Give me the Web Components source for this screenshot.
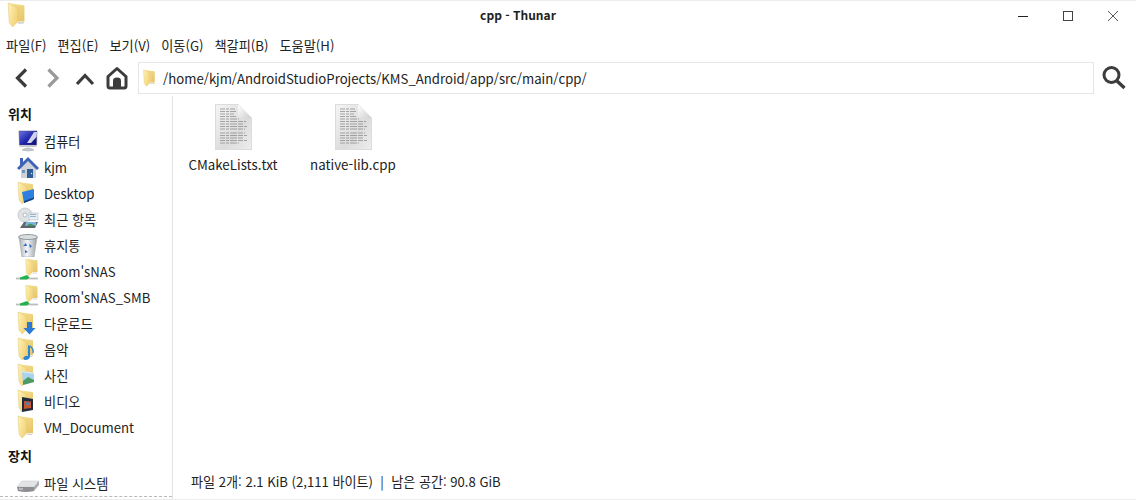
<!DOCTYPE html>
<html lang="ko">
<head>
<meta charset="utf-8">
<title>cpp - Thunar</title>
<style>
	html, body { margin: 0; height: 100%; background: #fff; }
	body { font: 13.2px "Noto Sans CJK KR", "Noto Sans", sans-serif; color: #222; overflow: hidden; }
</style>
</head>
<body>
<thunar-window></thunar-window>
<script>
// shared folder drawing, the overlay differs per place
const folderSvg = (size, extra = "", shrink = false) => `
	<svg width="${size}" height="${size}" viewBox="0 0 24 24">
		<defs>
			<linearGradient id="back" x1="0" y1="0" x2="1" y2="1">
				<stop offset="0" stop-color="#f8e596"/><stop offset="1" stop-color="#e6c368"/>
			</linearGradient>
			<linearGradient id="front" x1="0" y1="0" x2="1" y2="0.5">
				<stop offset="0" stop-color="#fdf3b8"/><stop offset="1" stop-color="#f3d377"/>
			</linearGradient>
		</defs>
		<g transform="${shrink ? "translate(5.500 -1) scale(.8 .78)" : "translate(-3 0)"}">
			<path d="M14 18.500 H20 L19 20 H14 Z" fill="#d5d5d5"/>
			<path d="M5 1 L19 3 Q20 3 20 4 V18 L14 18 V6 Z" fill="url(#back)"/>
			<path d="M5 1 L14 5.500 V18 L9 23 L6 19 Z" fill="url(#front)" stroke="#dcb95f" stroke-width=".4"/>
			${shrink ? "" : extra}
		</g>
		${shrink ? extra : ""}
	</svg>`;

const overlays = {
	plain: "",
	desktop: `<path d="M9 11 L21 8 V18 L11 22 Z" fill="#2f7fe0"/><path d="M11 20 L21 16.500 V18 L11 22 Z" fill="#16407f"/>`,
	share: `<path d="M0 19.500 H22" stroke="#bdbdbd" stroke-width="1.800"/><path d="M4 18.500 L11 16 L13.500 18.500 L11 20.500 L4 20.500 Z" fill="#22b14c"/>`,
	down: `<path d="M14 11 H19 V17 H22.500 L16.500 23.500 L10.500 17 H14 Z" fill="#2a79d4"/>`,
	music: `<path d="M15 8 L17 9 V19 Q17 23 12 23 Q9 22 11 20 Q13 18 15 19 Z" fill="#2c86cf"/><path d="M17 9 Q21 12 20 16" stroke="#2c86cf" stroke-width="1.400" fill="none"/>`,
	photo: `<path d="M9 8 L21 10 V19 L10 22 Z" fill="#a9d3ee"/><path d="M10 18 L15 14 L21 17 V19 L10 22 Z" fill="#4f9a64"/><path d="M9 8 L21 10 V11 L9 9 Z" fill="#e8eef2"/>`,
	video: `<path d="M9 8 L20 10 V21 L9 23 Z" fill="#1d2b3d"/><path d="M11 12 L18 12.500 V19 L11 20 Z" fill="#c9552e"/><path d="M12.500 13 L17 14 L14.500 17.500 Z" fill="#3e86c9"/>`,
};

customElements.define("folder-icon", class extends HTMLElement {
	constructor() {
		super();
		this.attachShadow({ mode: "open" });
	}
	connectedCallback() {
		const size = this.getAttribute("size") || 24;
		const kind = this.getAttribute("kind") || "plain";
		this.shadowRoot.innerHTML = `<style>:host { display: inline-flex; }</style>` + folderSvg(size, overlays[kind], kind === "share");
	}
});

const placeIcons = {
	computer: `<svg width="24" height="24" viewBox="0 0 24 24">
		<defs><linearGradient id="s" x1="0" y1="0" x2="1" y2="1"><stop offset="0" stop-color="#6a74e8"/><stop offset=".55" stop-color="#1f24a8"/><stop offset="1" stop-color="#0c1170"/></linearGradient></defs>
		<path d="M3 2 H21 L20.500 16 H3.500 Z" fill="url(#s)" stroke="#4a4a6a" stroke-width=".5"/>
		<path d="M11 14 L18 3 H21 L20.500 8 L15 14 Z" fill="#fff" opacity=".8"/>
		<path d="M3.500 16 H20.500 V18 H3.500 Z" fill="#c6c8ce"/>
		<path d="M6 21 Q12 17 18 21 Q12 23 6 21 Z" fill="#c9cbd0" stroke="#9a9ca2" stroke-width=".5"/></svg>`,
	home: `<svg width="24" height="24" viewBox="0 0 24 24">
		<path d="M12 3 L22 14 L20 14 V23 H5 V14 H2 Z" fill="#cfd3d9"/>
		<path d="M12 2 L23 13 L21 15 L12 6 L3 15 L1 13 L4 10 V3 H7 V7 Z" fill="#3e62b5"/>
		<path d="M11 14 H17 V23 H11 Z" fill="#2f5f96"/><circle cx="15.500" cy="18.500" r=".7" fill="#dde"/>
		<path d="M6 15 H9 V18 H6 Z" fill="#6f93bd"/></svg>`,
	recent: `<svg width="24" height="24" viewBox="0 0 24 24">
		<circle cx="9" cy="8" r="7" fill="#dfe3e6" stroke="#aeb4b9" stroke-width=".6"/>
		<circle cx="9" cy="8" r="2" fill="#f7f8f9" stroke="#9aa0a5" stroke-width=".6"/>
		<path d="M13 6 H22 V13 H13 Z" fill="#e9eef2" stroke="#9fb0bc" stroke-width=".5"/><path d="M14 7.500 H20 M14 9.500 H20" stroke="#7ea7c4" stroke-width=".8"/>
		<path d="M4 21 L8 15 H22 L19 21 Z" fill="#5e666b"/><path d="M10 15 H20 V19 H9 Z" fill="#79b6db"/><path d="M10 19 L14 16.500 L20 19 Z" fill="#4a8f5e"/></svg>`,
	trash: `<svg width="24" height="24" viewBox="0 0 24 24">
		<defs><linearGradient id="t" x1="0" y1="0" x2="1" y2="0"><stop offset="0" stop-color="#aab0b4"/><stop offset=".45" stop-color="#f4f6f7"/><stop offset="1" stop-color="#9aa1a6"/></linearGradient></defs>
		<path d="M3 4 L6 24 H18 L21 4 Z" fill="url(#t)" stroke="#92989c" stroke-width=".5"/>
		<ellipse cx="12" cy="4" rx="9.500" ry="2.500" fill="#d9dde0" stroke="#7f8589" stroke-width=".8"/>
		<path d="M7 13 L10 10 L11 13 Z M9 17 L12 19 L9 20 Z M13 11 L16 13 L14 15 Z" fill="#2e6fc4"/></svg>`,
	drive: `<svg width="24" height="24" viewBox="0 0 24 24">
		<path d="M1 16 L6 10 H23 L18 16 Z" fill="#e3e4e6" stroke="#b5b6b8" stroke-width=".4"/>
		<path d="M1 16 H18 V20 Q10 22 2 20 Z" fill="#8d8f92"/><path d="M18 16 L23 10 V14 L18 20 Z" fill="#a8aaad"/>
		<path d="M3 18 H7" stroke="#e5e5e5" stroke-width="1"/></svg>`,
};

customElements.define("place-row", class extends HTMLElement {
	constructor() {
		super();
		this.attachShadow({ mode: "open" });
	}
	connectedCallback() {
		const icon = this.getAttribute("icon");
		const folder = this.getAttribute("folder");
		const art = folder !== null
			? `<folder-icon kind="${folder || "plain"}"></folder-icon>`
			: placeIcons[icon];
		this.shadowRoot.innerHTML = `
			<style>
				:host { display: flex; align-items: center; height: 26px; padding-left: 16px; gap: 4px; white-space: nowrap; }
				.art { width: 24px; height: 24px; display: flex; }
			</style>
			<span class="art">${art}</span>
			<slot></slot>
		`;
	}
});

customElements.define("place-heading", class extends HTMLElement {
	constructor() {
		super();
		this.attachShadow({ mode: "open" }).innerHTML = `
			<style>
				:host { display: flex; align-items: center; height: 30px; padding-left: 8px; font-weight: 700; font-size: 13px; color: #111; }
			</style>
			<slot></slot>
		`;
	}
});

customElements.define("side-pane", class extends HTMLElement {
	constructor() {
		super();
		this.attachShadow({ mode: "open" }).innerHTML = `
			<style>
				:host { display: block; width: 172px; flex: none; border-right: 1px solid #e4e4e4; overflow: hidden; position: relative; }
				.top { height: 2px; }
				.cut { position: absolute; left: 0; right: 0; bottom: 2px; border-top: 1px dashed #b9b9b9; }
			</style>
			<div class="top"></div>
			<place-heading>위치</place-heading>
			<place-row icon="computer">컴퓨터</place-row>
			<place-row icon="home">kjm</place-row>
			<place-row folder="desktop">Desktop</place-row>
			<place-row icon="recent">최근 항목</place-row>
			<place-row icon="trash">휴지통</place-row>
			<place-row folder="share">Room'sNAS</place-row>
			<place-row folder="share">Room'sNAS_SMB</place-row>
			<place-row folder="down">다운로드</place-row>
			<place-row folder="music">음악</place-row>
			<place-row folder="photo">사진</place-row>
			<place-row folder="video">비디오</place-row>
			<place-row folder="">VM_Document</place-row>
			<place-heading>장치</place-heading>
			<place-row icon="drive">파일 시스템</place-row>
			<div class="cut"></div>
		`;
	}
});

customElements.define("file-item", class extends HTMLElement {
	constructor() {
		super();
		this.attachShadow({ mode: "open" }).innerHTML = `
			<style>
				:host { display: flex; flex-direction: column; align-items: center; width: 120px; font-size: 13.330px; }
				svg { display: block; }
				.name { margin-top: 4px; line-height: 20px; }
			</style>
			<svg width="48" height="48" viewBox="0 0 48 48">
				<defs>
					<linearGradient id="page" x1="0" y1="0" x2="1" y2="1">
						<stop offset="0" stop-color="#f4f4f4"/><stop offset=".6" stop-color="#dcdcdc"/><stop offset="1" stop-color="#ededed"/>
					</linearGradient>
					<linearGradient id="fold" x1="0" y1="0" x2="1" y2="1">
						<stop offset="0" stop-color="#ffffff"/><stop offset="1" stop-color="#cfcfcf"/>
					</linearGradient>
					<filter id="soft"><feGaussianBlur stdDeviation=".4"/></filter>
				</defs>
				<path d="M6 1 H29 L43 15 V47 H6 Z" fill="#dcdcdc"/>
				<path d="M7 2 H29 L42 15 V46 H7 Z" fill="url(#page)"/>
				<path d="M29 1.500 L42.500 15 H32 Q29 15 29 12 Z" fill="url(#fold)"/>
				<g stroke="#858585" stroke-width=".7" stroke-dasharray="5 1 3 1 7 1" fill="none" filter="url(#soft)">
					<path d="M11 6 H26 M11 8.500 H27 M11 11 H25 M11 13.500 H27 M11 16 H30 M11 18.500 H37 M11 21 H35 M11 23.500 H38 M11 26 H36"/>
					<path d="M11 30 H36 M11 32.500 H38 M11 35 H34 M11 37.500 H38 M11 40 H30"/>
				</g>
			</svg>
			<span class="name"><slot></slot></span>
		`;
	}
});

customElements.define("file-view", class extends HTMLElement {
	constructor() {
		super();
		this.attachShadow({ mode: "open" }).innerHTML = `
			<style>
				:host { display: flex; flex-direction: column; flex: 1; min-width: 0; }
				.grid { flex: 1; display: flex; padding-top: 7px; }
				.status { height: 36px; padding-left: 18px; display: flex; align-items: center; font-size: 13.100px; white-space: pre; }
			</style>
			<div class="grid">
				<file-item>CMakeLists.txt</file-item>
				<file-item>native-lib.cpp</file-item>
			</div>
			<div class="status">파일 2개: 2.1 KiB (2,111 바이트)  |  남은 공간: 90.8 GiB</div>
		`;
	}
});

customElements.define("tool-bar", class extends HTMLElement {
	constructor() {
		super();
		this.attachShadow({ mode: "open" }).innerHTML = `
			<style>
				:host { display: flex; align-items: center; height: 36px; flex: none; padding: 0 6px 0 5px; }
				button { all: unset; display: flex; width: 32px; height: 32px; align-items: center; justify-content: center; }
				.nav { display: flex; width: 133px; flex: none; }
				.path { flex: 1; height: 32px; box-sizing: border-box; border: 1px solid #e6e6e6; display: flex; align-items: center; padding-left: 3px; gap: 3px; }
				.find { margin-left: 4px; }
			</style>
			<div class="nav">
				<button><svg width="28" height="28" viewBox="0 0 28 28"><path d="M19 5.500 L10.500 14 L19 22.500" fill="none" stroke="#3c3c3c" stroke-width="3.200"/></svg></button>
				<button><svg width="28" height="28" viewBox="0 0 28 28"><path d="M9.500 5.500 L18 14 L9.500 22.500" fill="none" stroke="#9a9a9a" stroke-width="3.200"/></svg></button>
				<button><svg width="28" height="28" viewBox="0 0 28 28"><path d="M6 20 L14 11.500 L22 20" fill="none" stroke="#3c3c3c" stroke-width="3.200"/></svg></button>
				<button><svg width="28" height="28" viewBox="0 0 28 28"><path d="M5 12.500 L14 4.500 L23 12.500 V22 Q23 24 21 24 H7 Q5 24 5 22 Z" fill="none" stroke="#3c3c3c" stroke-width="3" stroke-linejoin="round"/><path d="M10 24 V16.500 Q10 13.500 14 13.500 Q18 13.500 18 16.500 V24 Z" fill="#3c3c3c"/></svg></button>
			</div>
			<div class="path"><folder-icon size="18"></folder-icon><span>/home/kjm/AndroidStudioProjects/KMS_Android/app/src/main/cpp/</span></div>
			<button class="find"><svg width="28" height="28" viewBox="0 0 28 28"><circle cx="11.500" cy="11" r="7.500" fill="none" stroke="#3c3c3c" stroke-width="3"/><path d="M17 17 L24.500 24" stroke="#3c3c3c" stroke-width="3.400"/></svg></button>
		`;
	}
});

customElements.define("menu-bar", class extends HTMLElement {
	constructor() {
		super();
		this.attachShadow({ mode: "open" }).innerHTML = `
			<style>
				:host { display: flex; height: 30px; flex: none; align-items: center; padding-left: 6px; gap: 11px; }
			</style>
			<span>파일(F)</span><span>편집(E)</span><span>보기(V)</span><span>이동(G)</span><span>책갈피(B)</span><span>도움말(H)</span>
		`;
	}
});

customElements.define("title-bar", class extends HTMLElement {
	constructor() {
		super();
		this.attachShadow({ mode: "open" }).innerHTML = `
			<style>
				:host { display: flex; align-items: center; height: 30px; flex: none; border-top: 1px solid #ececec; box-sizing: border-box; padding: 0 1px 0 6px; }
				.title { flex: 1; text-align: center; font-size: 12px; font-weight: 700; padding: 0 0 2px 4px; }
				.app { display: flex; margin-top: -1px; }
				.ctl { display: flex; }
				.ctl span { width: 45px; height: 28px; display: flex; align-items: center; justify-content: center; }
			</style>
			<div class="app"><folder-icon size="26"></folder-icon></div>
			<div class="title">cpp - Thunar</div>
			<div class="ctl">
				<span><svg width="12" height="12" viewBox="0 0 12 12"><path d="M1 6.500 H11" stroke="#222" stroke-width="1"/></svg></span>
				<span><svg width="12" height="12" viewBox="0 0 12 12"><rect x="1.500" y="1.500" width="9" height="9" fill="none" stroke="#444" stroke-width="1"/></svg></span>
				<span><svg width="12" height="12" viewBox="0 0 12 12"><path d="M1 1 L11 11 M11 1 L1 11" stroke="#444" stroke-width=".9"/></svg></span>
			</div>
		`;
	}
});

customElements.define("thunar-window", class extends HTMLElement {
	constructor() {
		super();
		this.attachShadow({ mode: "open" }).innerHTML = `
			<style>
				:host { display: flex; flex-direction: column; height: 500px; width: 1136px; box-sizing: border-box; border-bottom: 1px solid #ececec; }
				.main { flex: 1; display: flex; min-height: 0; }
			</style>
			<title-bar></title-bar>
			<menu-bar></menu-bar>
			<tool-bar></tool-bar>
			<div class="main">
				<side-pane></side-pane>
				<file-view></file-view>
			</div>
		`;
	}
});
</script>
</body>
</html>
